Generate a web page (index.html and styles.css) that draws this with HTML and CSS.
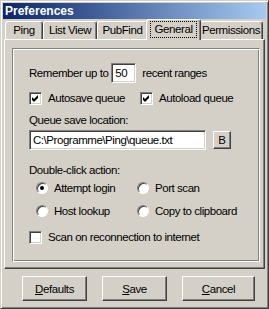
FILE: index.html
```html
<!DOCTYPE html>
<html>
<head>
<meta charset="utf-8">
<link rel="stylesheet" href="styles.css">
</head>
<body>
<div class="window">
  <div class="titlebar">Preferences</div>
  <div class="tabs">
    <div class="tab t-ping">Ping</div>
    <div class="tab t-list">List View</div>
    <div class="tab t-pub">PubFind</div>
    <div class="tab t-gen sel"><span class="focus">General</span></div>
    <div class="tab t-perm">Permissions</div>
  </div>
  <div class="panel">
    <div class="group">
      <div class="row r1">
        <span>Remember up to</span>
        <span class="field num">50</span>
        <span>recent ranges</span>
      </div>
      <div class="row r2">
        <label class="opt c1"><span class="cb on"><svg width="7" height="7" viewBox="0 0 7 7"><path d="M0 2 L2 4 L6 0 L6 3 L2 7 L0 5 Z" fill="#000"/></svg></span>Autosave queue</label>
        <label class="opt c2"><span class="cb on"><svg width="7" height="7" viewBox="0 0 7 7"><path d="M0 2 L2 4 L6 0 L6 3 L2 7 L0 5 Z" fill="#000"/></svg></span>Autoload queue</label>
      </div>
      <div class="row r3">Queue save location:</div>
      <div class="row r4">
        <span class="field path">C:\Programme\Ping\queue.txt</span>
        <span class="btn small">B</span>
      </div>
      <div class="row r5">Double-click action:</div>
      <div class="row r6 radios">
        <label class="opt rc1"><span class="radio on"></span>Attempt login</label>
        <label class="opt rc2"><span class="radio"></span>Port scan</label>
      </div>
      <div class="row r7 radios">
        <label class="opt rc1"><span class="radio"></span>Host lookup</label>
        <label class="opt rc2"><span class="radio"></span>Copy to clipboard</label>
      </div>
      <div class="row r8">
        <label class="opt"><span class="cb"></span>Scan on reconnection to internet</label>
      </div>
    </div>
  </div>
  <div class="buttons">
    <span class="btn big"><u>D</u>efaults</span>
    <span class="btn big"><u>S</u>ave</span>
    <span class="btn big wide"><u>C</u>ancel</span>
  </div>
</div>
</body>
</html>
```
FILE: styles.css
```css
* { box-sizing: border-box; }
body {
  margin: 0;
  background: #d4d0c8;
  font: 11px "Liberation Sans", Arial, sans-serif;
  color: #000;
}
.window {
  width: 269px;
  height: 309px;
  border: 1px solid;
  border-color: #d4d0c8 #404040 #404040 #d4d0c8;
  box-shadow: inset 1px 1px #fff, inset -1px -1px #808080;
  padding: 2px;
  display: flex;
  flex-direction: column;
}
.titlebar {
  height: 16px;
  flex: none;
  background: linear-gradient(to right, #0a246a, #a6caf0);
  color: #fff;
  font-weight: bold;
  font-size: 12px;
  line-height: 16px;
  padding-left: 2px;
}
.tabs {
  display: flex;
  align-items: flex-end;
  height: 20px;
  flex: none;
  padding-left: 2px;
  position: relative;
  z-index: 1;
}
.tab {
  height: 18px;
  background: #d4d0c8;
  border: 1px solid;
  border-bottom: none;
  border-color: #fff #404040 transparent #fff;
  box-shadow: inset -1px 0 #808080;
  border-radius: 3px 3px 0 0;
  text-align: center;
  line-height: 16px;
  font-size: 11.5px;
  letter-spacing: -0.4px;
}
.t-ping { width: 38px; }
.t-list { width: 54px; }
.t-pub { width: 51px; }
.t-gen { width: 51px; }
.t-perm { width: 64px; }
.tab.sel {
  height: 21px;
  width: 55px;
  margin: 0 -2px -1px;
  position: relative;
  z-index: 2;
  padding-top: 1px;
}
.focus {
  display: inline-block;
  outline: 1px dotted #000;
  padding: 0 3px;
  height: 15px;
  line-height: 14px;
}
.panel {
  flex: none;
  height: 230px;
  margin: 0 1px;
  border: 1px solid;
  border-color: #fff #404040 #404040 #fff;
  box-shadow: inset -1px -1px #808080;
  padding: 8px 4px 6px 7px;
}
.group {
  height: 100%;
  border: 1px solid;
  border-color: #808080 #fff #fff #808080;
  box-shadow: inset 1px 1px #fff, inset -1px -1px #808080;
  padding-left: 16px;
  display: flex;
  flex-direction: column;
  font-size: 11.5px;
  letter-spacing: -0.45px;
}
.row { display: flex; align-items: center; flex: none; }
.r1 { margin-top: 14px; height: 20px; }
.r2 { margin-top: 7px; height: 16px; }
.r3 { margin-top: 7px; height: 14px; }
.r4 { margin-top: 3px; height: 20px; }
.r5 { margin-top: 13px; height: 14px; }
.r6 { margin-top: 4px; height: 14px; }
.r7 { margin-top: 9px; height: 14px; }
.r8 { margin-top: 12px; height: 14px; }
.field {
  background: #fff;
  border: 1px solid;
  border-color: #808080 #fff #fff #808080;
  box-shadow: inset 1px 1px #404040, inset -1px -1px #d4d0c8;
  height: 20px;
  line-height: 18px;
  padding: 0 3px;
}
.num { width: 25px; margin: 0 6px 0 3px; }
.path { width: 177px; }
.opt { display: flex; align-items: center; }
.c1 { width: 111px; }
.cb {
  width: 13px;
  height: 13px;
  background: #fff;
  border: 1px solid;
  border-color: #808080 #fff #fff #808080;
  box-shadow: inset 1px 1px #404040, inset -1px -1px #d4d0c8;
  margin-right: 6px;
  display: flex;
  align-items: center;
  justify-content: center;
}
.cb svg { display: block; }
.radios { padding-left: 7px; }
.rc1 { width: 101px; }
.radio {
  width: 12px;
  height: 12px;
  border-radius: 50%;
  background: #fff;
  border: 1px solid;
  border-color: #808080 #fff #fff #808080;
  box-shadow: inset 1px 1px #404040;
  margin-right: 6px;
  display: flex;
  align-items: center;
  justify-content: center;
}
.radio.on::after {
  content: "";
  width: 4px;
  height: 4px;
  border-radius: 50%;
  background: #000;
}
.btn {
  display: flex;
  align-items: center;
  justify-content: center;
  background: #d4d0c8;
  border: 1px solid;
  border-color: #fff #404040 #404040 #fff;
  box-shadow: inset -1px -1px #808080;
  letter-spacing: -0.4px;
}
.small { width: 18px; height: 18px; margin-left: 7px; }
.buttons {
  display: flex;
  gap: 15px;
  padding: 7px 0 0 19px;
  flex: none;
}
.big { width: 65px; height: 25px; font-size: 11.5px; }
.wide { width: 73px; }
```
